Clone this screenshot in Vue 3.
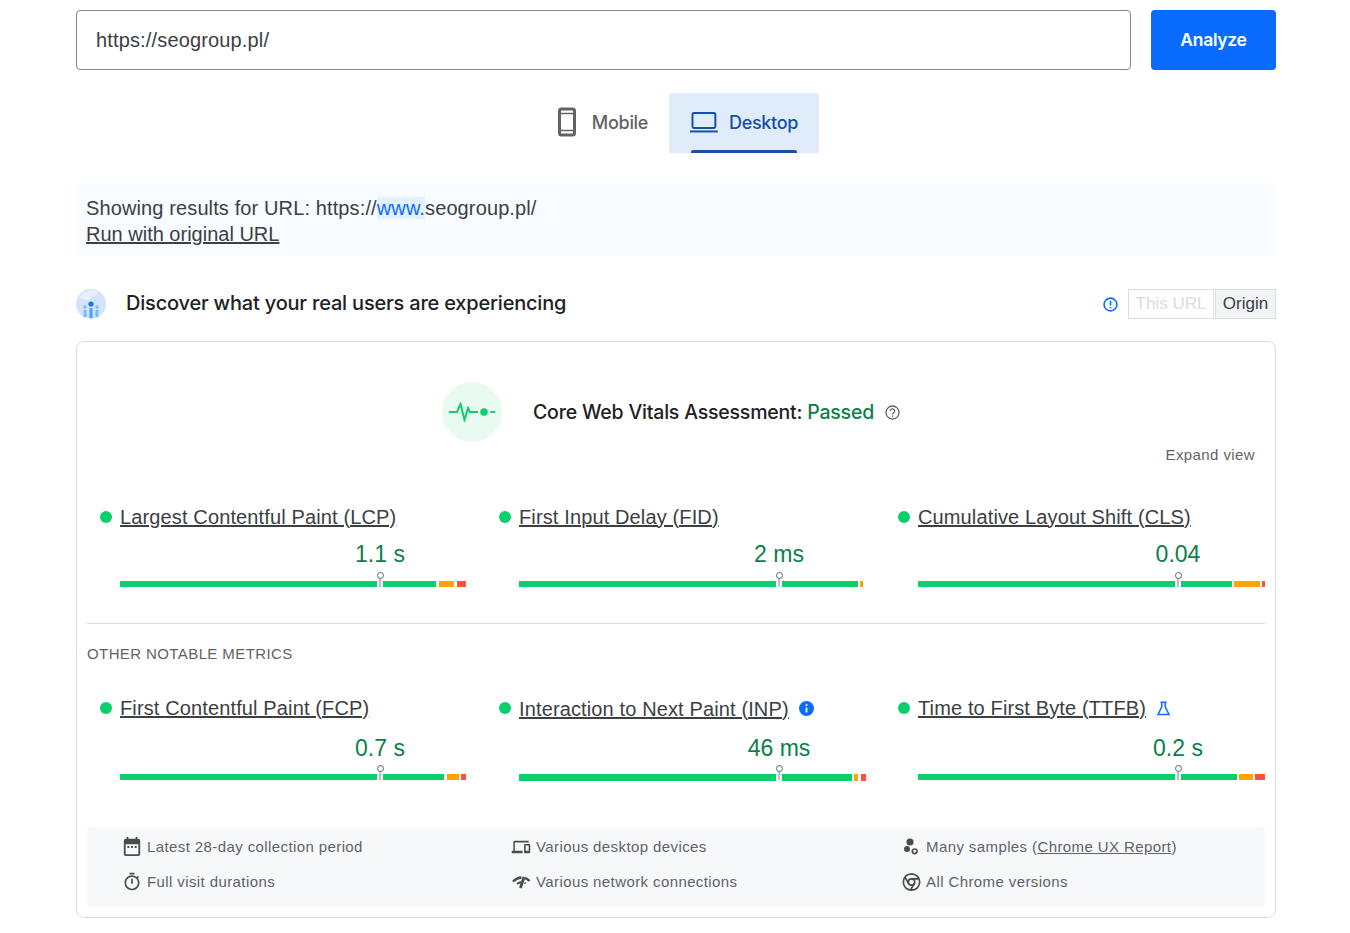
<template>
  <div class="page">
    <div class="url-row">
      <div class="url-input">https://seogroup.pl/</div>
      <button class="analyze">Analyze</button>
    </div>

    <div class="tabs">
      <div class="tab">
        <svg class="tab-icon" width="24" height="32" viewBox="0 0 24 32">
          <rect x="4.500" y="3" width="15" height="26" rx="2" fill="none" stroke="#5f6368" stroke-width="3" />
          <path d="M5 7.500h14M5 24.500h14" stroke="#5f6368" stroke-width="1.600" />
        </svg>
        <span>Mobile</span>
      </div>
      <div class="tab active">
        <svg class="tab-icon" width="28" height="22" viewBox="0 0 28 22">
          <rect x="2.500" y="2" width="23" height="15" rx="1.500" fill="none" stroke="#174ea6" stroke-width="2" />
          <path d="M0 20.500h28" stroke="#174ea6" stroke-width="2" />
        </svg>
        <span>Desktop</span>
      </div>
    </div>

    <div class="notice">
      <div class="notice-line">Showing results for URL: https://<span class="www">www.</span>seogroup.pl/</div>
      <a class="plain-link">Run with original URL</a>
    </div>

    <div class="section-head">
      <svg class="users-icon" width="30" height="30" viewBox="0 0 30 30">
        <circle cx="15" cy="15" r="15" fill="#d2e3fc" />
        <path d="M3 10C6 3 14 -1 21 2c2 3-1 5-4 5-3 1-2 4-6 4-3 0-5-2-8-1z" fill="#e8f0fe" />
        <circle cx="15" cy="15" r="2.600" fill="#1a73e8" />
        <circle cx="9" cy="18" r="1.700" fill="#8ab4f8" />
        <circle cx="21" cy="18" r="1.700" fill="#8ab4f8" />
        <rect x="13.400" y="19" width="3.200" height="10" fill="#4aa8f0" />
        <rect x="7.600" y="21" width="3" height="7" fill="#6fbdf5" />
        <rect x="19.400" y="21" width="3" height="7" fill="#6fbdf5" />
      </svg>
      <h2>Discover what your real users are experiencing</h2>
      <div class="toggle-wrap">
        <svg width="15" height="15" viewBox="0 0 15 15">
          <circle cx="7.500" cy="7.500" r="6.400" fill="none" stroke="#0a6cff" stroke-width="1.600" />
          <path d="M7.500 3.800v4.600M7.500 9.800v1.500" stroke="#0a6cff" stroke-width="1.600" />
        </svg>
        <div class="toggle off">This URL</div>
        <div class="toggle on">Origin</div>
      </div>
    </div>

    <div class="card">
      <div class="assessment">
        <div class="pulse">
          <svg width="46" height="20" viewBox="0 0 46 20">
            <path d="M0 10h8l3.500-8 4 16 3.500-12 2 4h8" fill="none" stroke="#0cce6b" stroke-width="2" />
            <circle cx="35" cy="10" r="3.800" fill="#0cce6b" />
            <path d="M41.500 10H46" stroke="#0cce6b" stroke-width="2" />
          </svg>
        </div>
        <div class="assess-text">Core Web Vitals Assessment: <span class="passed">Passed</span></div>
        <svg class="help" width="15" height="15" viewBox="0 0 15 15">
          <circle cx="7.500" cy="7.500" r="6.500" fill="none" stroke="#5f6368" stroke-width="1.300" />
          <path d="M5.400 6a2.100 2.100 0 1 1 3.300 1.700c-.8.500-1.200.9-1.200 1.700M7.500 10.600v1.300" fill="none" stroke="#5f6368" stroke-width="1.300" />
        </svg>
      </div>
      <div class="expand">Expand view</div>

      <div class="metrics first">
        <div v-for="m in coreMetrics" :key="m.name" class="metric">
          <div class="metric-head">
            <span class="dot"></span>
            <a class="metric-name">{{ m.name }}</a>
          </div>
          <div class="metric-value">{{ m.value }}</div>
          <div class="bar">
            <span
              v-for="(s, i) in m.segments"
              :key="i"
              class="seg"
              :style="{ width: s[0] + 'px', marginLeft: s[1] + 'px', background: colors[s[2]] }"
            ></span>
            <span class="marker"></span>
          </div>
        </div>
      </div>

      <div class="divider"></div>
      <div class="other-title">OTHER NOTABLE METRICS</div>

      <div class="metrics second">
        <div v-for="m in otherMetrics" :key="m.name" class="metric" :class="m.cls">
          <div class="metric-head">
            <span class="dot"></span>
            <a class="metric-name">{{ m.name }}</a>
            <svg v-if="m.badge === 'info'" class="badge" width="15" height="15" viewBox="0 0 15 15">
              <circle cx="7.500" cy="7.500" r="7.500" fill="#0a6cff" />
              <path d="M7.500 3.200v1.800M7.500 6.400v5" stroke="#fff" stroke-width="1.700" />
            </svg>
            <svg v-if="m.badge === 'flask'" class="badge" width="15" height="15" viewBox="0 0 15 15">
              <path d="M4.500 1.200h6M5.800 1.200v4.600L2 13.400h11L9.200 5.800V1.200" fill="none" stroke="#0a6cff" stroke-width="1.500" />
            </svg>
          </div>
          <div class="metric-value">{{ m.value }}</div>
          <div class="bar">
            <span
              v-for="(s, i) in m.segments"
              :key="i"
              class="seg"
              :style="{ width: s[0] + 'px', marginLeft: s[1] + 'px', background: colors[s[2]] }"
            ></span>
            <span class="marker"></span>
          </div>
        </div>
      </div>

      <div class="facts">
        <div class="fact">
          <svg width="20" height="20" viewBox="1 1 22 22" fill="#4a4d50">
            <path d="M19 3h-1V1h-2v2H8V1H6v2H5a2 2 0 0 0-2 2v15a2 2 0 0 0 2 2h14a2 2 0 0 0 2-2V5a2 2 0 0 0-2-2zm0 17H5V9h14v11z" />
            <path d="M7 11h2v2H7zM11 11h2v2h-2zM15 11h2v2h-2z" />
          </svg>
          <span>Latest 28-day collection period</span>
        </div>
        <div class="fact">
          <svg width="20" height="20" viewBox="-1 0 26 24" fill="#4a4d50">
            <path d="M4 6h18V4H4c-1.100 0-2 .9-2 2v11H0v3h14v-3H4V6zm19 2h-6c-.55 0-1 .45-1 1v10c0 .55.45 1 1 1h6c.55 0 1-.45 1-1V9c0-.55-.45-1-1-1zm-1 9h-4v-7h4v7z" />
          </svg>
          <span>Various desktop devices</span>
        </div>
        <div class="fact">
          <svg width="20" height="20" viewBox="0 0 20 20" fill="#4a4d50">
            <circle cx="9" cy="5" r="3.600" />
            <circle cx="6" cy="12" r="3" />
            <circle cx="13.700" cy="14.300" r="2.300" fill="none" stroke="#4a4d50" stroke-width="1.700" />
          </svg>
          <span>Many samples (<a class="plain-link">Chrome UX Report</a>)</span>
        </div>
        <div class="fact">
          <svg width="20" height="20" viewBox="0 0 24 24" fill="#4a4d50">
            <path d="M15 1H9v2h6V1zm-4 13h2V8h-2v6zm8.030-6.610l1.420-1.420c-.43-.51-.9-.99-1.410-1.410l-1.420 1.420A8.962 8.962 0 0 0 12 4c-4.970 0-9 4.030-9 9s4.020 9 9 9a8.994 8.994 0 0 0 7.030-14.610zM12 20c-3.870 0-7-3.130-7-7s3.130-7 7-7 7 3.130 7 7-3.130 7-7 7z" />
          </svg>
          <span>Full visit durations</span>
        </div>
        <div class="fact">
          <svg width="20" height="20" viewBox="0 0 20 20" fill="none" stroke="#4a4d50">
            <path d="M2 9.500Q6 5.700 10.500 5.500M14 5.800Q16.500 6.800 18.500 9" stroke-width="2.400" />
            <path d="M6 12Q8 10.500 10 10.300M13.500 10.800 14.500 11.500" stroke-width="2" />
            <path d="M13 5 9.400 16" stroke-width="2.800" />
          </svg>
          <span>Various network connections</span>
        </div>
        <div class="fact">
          <svg width="20" height="20" viewBox="0 0 20 20" fill="none" stroke="#4a4d50" stroke-width="1.700">
            <circle cx="10.500" cy="10" r="8.200" />
            <circle cx="10.500" cy="10" r="3.200" />
            <path d="M10.500 6.800h7.500M7.700 11.600 4 5.200M13.300 11.600 9.500 18" />
          </svg>
          <span>All Chrome versions</span>
        </div>
      </div>
    </div>
  </div>
</template>

<script setup>
const colors = { g: '#0cce6b', o: '#ffa400', r: '#ff4e42' };

// [width, gap before, colour], measured off the distribution bars
const coreMetrics = [
  { name: 'Largest Contentful Paint (LCP)', value: '1.1 s', segments: [[257, 0, 'g'], [53, 6, 'g'], [15, 3, 'o'], [9, 3, 'r']] },
  { name: 'First Input Delay (FID)', value: '2 ms', segments: [[257, 0, 'g'], [76, 6, 'g'], [3, 2, 'o']] },
  { name: 'Cumulative Layout Shift (CLS)', value: '0.04', segments: [[257, 0, 'g'], [51, 6, 'g'], [26, 2, 'o'], [3, 2, 'r']] },
];

const otherMetrics = [
  { name: 'First Contentful Paint (FCP)', value: '0.7 s', segments: [[257, 0, 'g'], [61, 6, 'g'], [12, 3, 'o'], [5, 2, 'r']] },
  { name: 'Interaction to Next Paint (INP)', value: '46 ms', badge: 'info', cls: 'inp', segments: [[257, 0, 'g'], [70, 6, 'g'], [4, 2, 'o'], [5, 3, 'r']] },
  { name: 'Time to First Byte (TTFB)', value: '0.2 s', badge: 'flask', segments: [[257, 0, 'g'], [56, 6, 'g'], [14, 2, 'o'], [10, 2, 'r']] },
];
</script>

<style>
body {
  background: #fff;
}
</style>

<style scoped>
.page {
  width: 1200px;
  margin-left: 76px;
  padding: 10px 0 15px;
  font-family: "Liberation Sans", Arial, sans-serif;
  color: #3c4043;
}

.url-row {
  display: flex;
  gap: 20px;
}

.url-input {
  flex: 1;
  height: 60px;
  box-sizing: border-box;
  border: 1px solid #80868b;
  border-radius: 4px;
  padding-left: 19px;
  font-size: 20px;
  line-height: 58px;
  letter-spacing: 0.15px;
}

.analyze {
  width: 125px;
  height: 60px;
  border: 0;
  border-radius: 4px;
  padding-bottom: 2px;
  background: #0a6cff;
  color: #fff;
  font-family: Inter, sans-serif;
  font-size: 17.500px;
  font-weight: 600;
  letter-spacing: -0.3px;
}

.tabs {
  display: flex;
  justify-content: center;
  margin-top: 23px;
  padding-left: 4px;
}

.tab {
  display: flex;
  align-items: center;
  gap: 13px;
  height: 60px;
  box-sizing: border-box;
  padding: 0 21px 2px 18px;
  color: #5f6368;
  font-family: Inter, sans-serif;
  font-size: 18px;
  font-weight: 500;
  letter-spacing: -0.3px;
}

.tab.active {
  position: relative;
  width: 150px;
  gap: 11px;
  padding-left: 21px;
  background: #e1ecfa;
  color: #174ea6;
}

.tab.active::after {
  content: "";
  position: absolute;
  left: 22px;
  right: 22px;
  bottom: 0;
  height: 3px;
  border-radius: 2px 2px 0 0;
  background: #174ea6;
}

.notice {
  margin-top: 30px;
  padding: 12px 10px 9px;
  background: #f8fbff;
  font-size: 20px;
  line-height: 26px;
  border-radius: 4px;
}

.notice-line {
  letter-spacing: 0.12px;
}

.www {
  background: #e3f0ff;
  color: #0a6cff;
}

.plain-link {
  text-decoration: underline;
  color: inherit;
}

.section-head {
  display: flex;
  align-items: center;
  height: 30px;
  margin-top: 33px;
}

.users-icon {
  margin-right: 20px;
}

h2 {
  margin: 0 0 2px;
  font-family: Inter, sans-serif;
  font-size: 20px;
  font-weight: 500;
  letter-spacing: -0.2px;
  color: #202124;
}

.toggle-wrap {
  display: flex;
  align-items: center;
  margin-left: auto;
}

.toggle-wrap svg {
  margin-right: 10px;
}

.toggle {
  height: 30px;
  box-sizing: border-box;
  border: 1px solid #dadce0;
  font-size: 17px;
  line-height: 28px;
  text-align: center;
}

.toggle.off {
  width: 86px;
  color: #dadce0;
  margin-right: 1px;
}

.toggle.on {
  width: 61px;
  background: #f1f3f4;
  color: #3c4043;
}

.card {
  margin-top: 22px;
  height: 577px;
  box-sizing: border-box;
  border: 1px solid #dadce0;
  border-radius: 8px;
  padding: 40px 10px 10px;
}

.assessment {
  display: flex;
  align-items: center;
  padding-left: 355px;
}

.pulse {
  display: flex;
  align-items: center;
  justify-content: center;
  width: 60px;
  height: 60px;
  border-radius: 50%;
  background: #e9faf1;
  margin-right: 31px;
}

.assess-text {
  font-family: Inter, sans-serif;
  font-size: 19.500px;
  font-weight: 500;
  letter-spacing: -0.2px;
  color: #202124;
}

.passed {
  color: #0a7f4a;
}

.help {
  margin-left: 11px;
}

.expand {
  text-align: right;
  padding-right: 10px;
  margin-top: 4px;
  font-size: 15px;
  line-height: 18px;
  letter-spacing: 0.4px;
  color: #5f6368;
}

.metrics {
  display: grid;
  grid-template-columns: repeat(3, 367px);
  column-gap: 32px;
  padding-left: 13px;
}

.metrics.first {
  margin-top: 40px;
}

.metrics.second {
  margin-top: 32px;
}

.metric-head {
  display: flex;
  align-items: center;
  height: 26px;
}

.dot {
  width: 12px;
  height: 12px;
  border-radius: 50%;
  background: #0cce6b;
  margin-right: 8px;
}

.metric-name {
  font-size: 20px;
  letter-spacing: 0.13px;
  text-decoration: underline;
}

.inp .metric-name {
  margin-top: 2px;
}

.badge {
  margin-left: 10px;
}

.metric-value {
  margin: 10px 0 0 20px;
  padding-left: 173px;
  width: 174px;
  font-size: 23px;
  line-height: 28px;
  color: #0a7f4a;
  text-align: center;
}

.second .metric-value {
  margin-top: 13px;
}

.bar {
  position: relative;
  display: flex;
  margin: 13px 0 0 20px;
  height: 6px;
}

.second .bar {
  margin-top: 12px;
}

.inp .bar {
  height: 7px;
}

.seg {
  height: 100%;
}

.marker {
  position: absolute;
  left: 259px;
  top: -3px;
  width: 2px;
  height: 9px;
  background: #bdc1c6;
}

.marker::before {
  content: "";
  position: absolute;
  left: -2.500px;
  top: -6px;
  width: 7px;
  height: 7px;
  box-sizing: border-box;
  border: 1px solid #5f6368;
  border-radius: 50%;
  background: #fff;
}

.divider {
  height: 1px;
  margin-top: 36px;
  background: #dadce0;
}

.other-title {
  margin-top: 21px;
  font-size: 15px;
  line-height: 18px;
  letter-spacing: 0.4px;
  color: #5f6368;
}

.facts {
  display: grid;
  grid-template-columns: 389px 390px 1fr;
  grid-auto-rows: 35px;
  margin-top: 46px;
  height: 80px;
  box-sizing: border-box;
  padding: 2px 0 0 35px;
  background: #f7f8fa;
  border-radius: 4px;
  font-size: 15px;
  letter-spacing: 0.4px;
  color: #5f6368;
}

.fact {
  display: flex;
  align-items: center;
  gap: 5px;
}
</style>
